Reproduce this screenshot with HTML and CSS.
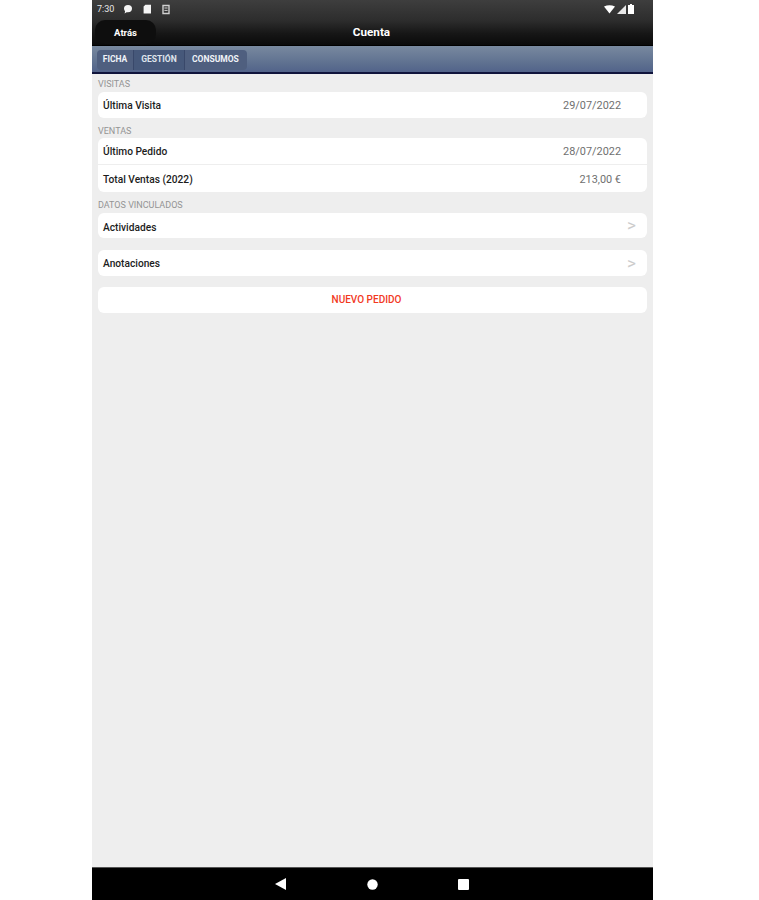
FILE: index.html
```html
<!DOCTYPE html>
<html lang="es">
<head>
  <meta charset="UTF-8" />
  <meta name="viewport" content="width=device-width, initial-scale=1.0"/>
  <title>Cuenta</title>
  <link rel="stylesheet" href="styles.css">
</head>
<body>
  <div class="screen">
    <div class="topbar">
      <div class="status">
        <div class="status-left">
          <span class="clock">7:30</span>
          <svg class="st-icon" width="10" height="10" viewBox="0 0 10 10"><path d="M5 1a4 3.6 0 0 1 4 3.6A4 3.6 0 0 1 5 8.2H3.6L1.6 9.4l.5-2.2A3.6 3.6 0 0 1 1 4.6 4 3.6 0 0 1 5 1z" fill="#f4f4f4"/></svg>
          <svg class="st-icon" width="10" height="10" viewBox="0 0 10 10"><path d="M3.4.8H9v8.6H1.6V2.6z" fill="#f4f4f4"/></svg>
          <svg class="st-icon" width="10" height="11" viewBox="0 0 10 11"><path d="M2 1.5h6v8H2z" fill="none" stroke="#cfcfcf" stroke-width="1.4"/><path d="M3.4 4h3.2M3.4 6.4h3.2" stroke="#cfcfcf"/></svg>
        </div>
        <div class="status-right">
          <svg width="11" height="9" viewBox="0 0 11 9"><path d="M0 1.6Q5.500-1.200 11 1.600L5.500 8.600z" fill="#fff"/></svg>
          <svg width="9" height="9" viewBox="0 0 9 9"><path d="M9 0v9H0z" fill="#e8e8e8"/></svg>
          <svg width="6" height="10" viewBox="0 0 6 10"><path d="M2 0h2v1h2v9H0V1h2z" fill="#fff"/></svg>
        </div>
      </div>
      <div class="navbar">
        <button class="back">Atrás</button>
        <h1 class="title">Cuenta</h1>
      </div>
    </div>

    <div class="tabbar">
      <div class="tabs">
        <span class="tab">FICHA</span>
        <span class="tab tab-active">GESTIÓN</span>
        <span class="tab">CONSUMOS</span>
      </div>
    </div>

    <main class="content">
      <div class="section-label">VISITAS</div>
      <div class="card">
        <div class="row row-single"><span class="row-name">Última Visita</span><span class="row-value">29/07/2022</span></div>
      </div>

      <div class="section-label label-ventas">VENTAS</div>
      <div class="card">
        <div class="row row-line"><span class="row-name">Último Pedido</span><span class="row-value">28/07/2022</span></div>
        <div class="row"><span class="row-name">Total Ventas (2022)</span><span class="row-value">213,00 €</span></div>
      </div>

      <div class="section-label label-datos">DATOS VINCULADOS</div>
      <div class="card card-link">
        <div class="row"><span class="row-name name-low">Actividades</span><span class="chevron">&gt;</span></div>
      </div>
      <div class="card card-link card-gap">
        <div class="row"><span class="row-name">Anotaciones</span><span class="chevron">&gt;</span></div>
      </div>
      <div class="card card-action">NUEVO PEDIDO</div>
    </main>

    <div class="navkeys">
      <svg width="12" height="12" viewBox="0 0 12 12"><path d="M11 0v12L0 6z" fill="#fff"/></svg>
      <svg width="11" height="11" viewBox="0 0 11 11"><circle cx="5.500" cy="5.500" r="5.200" fill="#fff"/></svg>
      <svg width="11" height="11" viewBox="0 0 11 11"><rect width="11" height="11" rx="1" fill="#fff"/></svg>
    </div>
  </div>
</body>
</html>
```

FILE: styles.css
```css
* {
  box-sizing: border-box;
}

html, body {
  margin: 0;
  height: 100%;
  background: #ffffff;
}

body {
  font-family: 'Roboto', 'Liberation Sans', sans-serif;
}

.screen {
  width: 561px;
  height: 900px;
  margin-left: 92px;
  display: flex;
  flex-direction: column;
  background: #eeeeee;
}

.topbar {
  height: 46px;
  background: linear-gradient(#3e3e3e, #2d2d2d 45%, #161616 75%, #0a0a0a);
  border-bottom: 1px solid #000;
  color: #fff;
}

.status {
  height: 17px;
  padding: 1px 5px 0 5px;
  display: flex;
  justify-content: space-between;
  align-items: center;
}

.status-left, .status-right {
  display: flex;
  align-items: center;
}

.status-left {
  gap: 9px;
}

.status-right {
  gap: 2px;
  padding-right: 14px;
}

.clock {
  font-size: 9px;
  color: #e8e8e8;
}

.navbar {
  height: 28px;
  position: relative;
  display: flex;
  align-items: center;
  justify-content: center;
}

.back {
  position: absolute;
  left: 3px;
  top: 3px;
  width: 61px;
  height: 24px;
  border: none;
  border-radius: 10px;
  background: #0e0e0e;
  color: #fff;
  font-family: inherit;
  font-size: 9.500px;
  font-weight: 700;
  padding: 0;
}

.title {
  margin: 2px 2px 0 0;
  font-size: 11.700px;
  font-weight: 700;
}

.tabbar {
  height: 28px;
  padding: 4px 0 0 5px;
  background: linear-gradient(#78899f, #5d6f8f 70%, #52638a);
  border-bottom: 2px solid #10143c;
}

.tabs {
  display: flex;
  width: 150px;
  height: 20px;
  border-radius: 4px;
  overflow: hidden;
  background: #4f5f7f;
}

.tab {
  color: #f0f3f8;
  font-size: 8.500px;
  font-weight: 700;
  line-height: 19px;
  text-align: center;
  padding: 0 7px;
  white-space: nowrap;
}

.tab:first-child {
  width: 36px;
  padding: 0;
}

.tab-active {
  width: 52px;
  padding: 0;
  background: #46587a;
  border-left: 1px solid #39486a;
  border-right: 1px solid #39486a;
  color: #dfe4ec;
}

.content {
  flex: 1;
  padding: 0 6px;
}

.section-label {
  height: 18px;
  padding: 5px 0 0;
  font-size: 9px;
  line-height: 11px;
  color: #949494;
  white-space: nowrap;
}

.label-ventas {
  height: 20px;
  padding-top: 8px;
}

.label-datos {
  height: 21px;
  padding-top: 8px;
}

.card {
  background: #ffffff;
  border-radius: 6px;
}

.card-link {
  height: 25px;
}

.card-gap {
  height: 26px;
  margin-top: 12px;
}

.row {
  height: 27px;
  display: flex;
  justify-content: space-between;
  align-items: center;
  padding: 1px 26px 0 5px;
  font-size: 10.200px;
}

.row-single {
  height: 26px;
  padding-top: 0;
}

.card-link .row {
  height: 100%;
  padding: 0 10px 0 5px;
}

.row-line {
  border-bottom: 1px solid #eeeeee;
}

.row-name {
  font-weight: 500;
  color: #1c1c1c;
}

.name-low {
  padding-top: 3px;
}

.row-value {
  color: #6f6f6f;
  font-size: 10.900px;
}

.chevron {
  color: #cccccc;
  font-size: 17px;
  line-height: 1;
  margin-right: 1px;
}

.card-action {
  height: 26px;
  margin-top: 11px;
  padding-right: 12px;
  text-align: center;
  line-height: 25px;
  font-size: 10px;
  font-weight: 500;
  color: #f2391f;
}

.navkeys {
  height: 33px;
  background: #000;
  border-top: 1px solid #555;
  display: flex;
  align-items: center;
  justify-content: center;
  gap: 80px;
  padding-right: 2px;
}
```
